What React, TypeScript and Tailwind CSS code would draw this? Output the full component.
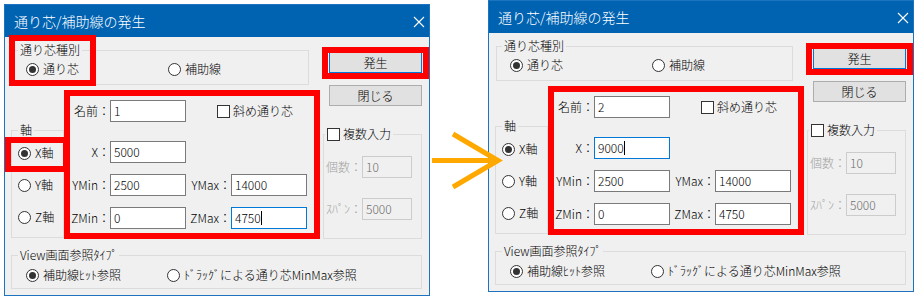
import React from 'react';

const Radio = ({ checked }: { checked?: boolean }) => (
  <span className="w-[13px] h-[13px] rounded-full border border-[#333333] bg-white flex items-center justify-center shrink-0">
    {checked && <span className="w-[7px] h-[7px] rounded-full bg-[#333333]" />}
  </span>
);

const Check = () => <span className="w-[13px] h-[13px] border border-[#333333] bg-white shrink-0" />;

const Option = ({ label, checked, className = '' }: { label: string; checked?: boolean; className?: string }) => (
  <div className={`flex items-center gap-[4px] ${className}`}>
    <Radio checked={checked} />
    <span className="whitespace-nowrap">{label}</span>
  </div>
);

const Field = ({ value, focused }: { value: string; focused?: boolean }) => (
  <div
    className={`w-[76px] h-[22px] border bg-white flex items-center pl-[3px] ${
      focused ? 'border-[#0078d7]' : 'border-[#7a7a7a]'
    }`}
  >
    <span>{value}</span>
    {focused && <span className="w-px h-[14px] bg-black" />}
  </div>
);

const Disabled = ({ label, value, className = '' }: { label: string; value: string; className?: string }) => (
  <div className={`flex items-center ${className}`}>
    <span className="w-[38px] text-right text-[#a0a0a0] whitespace-nowrap">{label}</span>
    <div className="w-[50px] h-[22px] border border-[#cccccc] bg-[#f0f0f0] flex items-center pl-[3px] text-[#6d6d6d]">
      {value}
    </div>
  </div>
);

type DialogProps = {
  name: string;
  x: string;
  focus: 'x' | 'zmax';
  marked?: boolean;
  className?: string;
};

const Dialog = ({ name, x, focus, marked, className = '' }: DialogProps) => (
  <div className={`w-[426px] h-[292px] border border-[#1e73be] bg-[#f0f0f0] flex flex-col ${className}`}>
    <div className="h-[32px] bg-[#0063b1] flex items-center justify-between pl-[9px] pr-[4px] text-white text-[14px]">
      <span>通り芯/補助線の発生</span>
      <svg width="12" height="12" viewBox="0 0 12 12" className="mt-[2px]">
        <path d="M1 1 L11 11 M11 1 L1 11" stroke="#ffffff" strokeWidth="1.1" fill="none" />
      </svg>
    </div>

    <div className="relative flex-1 pl-[6px]">
      <div className="flex items-start">
        <div className="w-[309px] flex flex-col">
          <fieldset className="mt-[6px] ml-[1px] w-[297px] h-[42px] border border-[#dcdcdc]">
            <legend className="ml-[5px] px-[2px]">通り芯種別</legend>
            <div className="h-[24px] flex items-center pl-[13px]">
              <Option label="通り芯" checked className="w-[142px]" />
              <Option label="補助線" />
            </div>
          </fieldset>

          <div className="flex items-start">
            <fieldset className="mt-[38px] w-[53px] h-[115px] border border-[#dcdcdc]">
              <legend className="ml-[6px] px-[2px]">軸</legend>
              <div className="flex flex-col pl-[6px]">
                <Option label="X軸" checked className="h-[32px]" />
                <Option label="Y軸" className="h-[32px]" />
                <Option label="Z軸" className="h-[32px]" />
              </div>
            </fieldset>

            <div className="mt-[5px] w-[256px] h-[149px] border-[6px] border-[#ff0000] flex flex-col">
              <div className="mt-[4px] flex items-center">
                <span className="w-[40px] text-right">名前：</span>
                <Field value={name} />
                <div className="ml-[31px] flex items-center gap-[3px]">
                  <Check />
                  <span>斜め通り芯</span>
                </div>
              </div>
              <div className="mt-[19px] flex items-center">
                <span className="w-[40px] text-right">X：</span>
                <Field value={x} focused={focus === 'x'} />
              </div>
              <div className="mt-[11px] flex items-center">
                <span className="w-[40px] text-right">YMin：</span>
                <Field value="2500" />
                <span className="w-[45px] text-right">YMax：</span>
                <Field value="14000" />
              </div>
              <div className="mt-[11px] flex items-center">
                <span className="w-[40px] text-right">ZMin：</span>
                <Field value="0" />
                <span className="w-[45px] text-right">ZMax：</span>
                <Field value="4750" focused={focus === 'zmax'} />
              </div>
            </div>
          </div>
        </div>

        <div className="flex flex-col">
          <button className="mt-[15px] ml-[9px] w-[93px] h-[21px] border border-[#0078d7] bg-[#e1e1e1] flex items-center justify-center">
            発生
          </button>
          <button className="mt-[12px] ml-[9px] w-[93px] h-[21px] border border-[#adadad] bg-[#e1e1e1] flex items-center justify-center">
            閉じる
          </button>
          <fieldset className="mt-[21px] ml-[3px] w-[99px] h-[112px] border border-[#dcdcdc]">
            <legend className="ml-[1px] px-[2px] flex items-center gap-[3px]">
              <Check />
              <span>複数入力</span>
            </legend>
            <Disabled label="個数：" value="10" className="mt-[15px]" />
            <Disabled label="ｽﾊﾟﾝ：" value="5000" className="mt-[20px]" />
          </fieldset>
        </div>
      </div>

      <fieldset className="mt-[9px] w-[411px] h-[41px] border border-[#dcdcdc]">
        <legend className="ml-[6px] px-[2px]">View画面参照ﾀｲﾌﾟ</legend>
        <div className="h-[26px] flex items-center pl-[14px]">
          <Option label="補助線ﾋｯﾄ参照" checked className="w-[141px]" />
          <Option label="ﾄﾞﾗｯｸﾞによる通り芯MinMax参照" />
        </div>
      </fieldset>

      {marked && (
        <>
          <div className="absolute left-[4px] top-[-2px] w-[87px] h-[51px] border-[6px] border-[#ff0000] pointer-events-none" />
          <div className="absolute left-0 top-[100px] w-[64px] h-[35px] border-[6px] border-[#ff0000] pointer-events-none" />
        </>
      )}
      <div className="absolute left-[317px] top-[10px] w-[107px] h-[32px] border-[6px] border-[#ff0000] pointer-events-none" />
    </div>
  </div>
);

export default function App() {
  return (
    <div className="relative w-[918px] h-[301px] bg-white flex items-start font-['Noto_Sans_CJK_JP',sans-serif] font-light text-[12px] leading-[14px] text-black">
      <Dialog name="1" x="5000" focus="zmax" marked className="ml-[4px] mt-[4px]" />
      <Dialog name="2" x="9000" focus="x" className="ml-[58px]" />
      <svg className="absolute left-[430px] top-[128px] pointer-events-none" width="75" height="64" viewBox="0 0 75 64">
        <path d="M2 32.5 L68 32.5" stroke="#ffa800" strokeWidth="5" fill="none" />
        <path d="M23 6 L68 32.5 L23 59" stroke="#ffa800" strokeWidth="5" fill="none" strokeLinejoin="miter" />
      </svg>
    </div>
  );
}
